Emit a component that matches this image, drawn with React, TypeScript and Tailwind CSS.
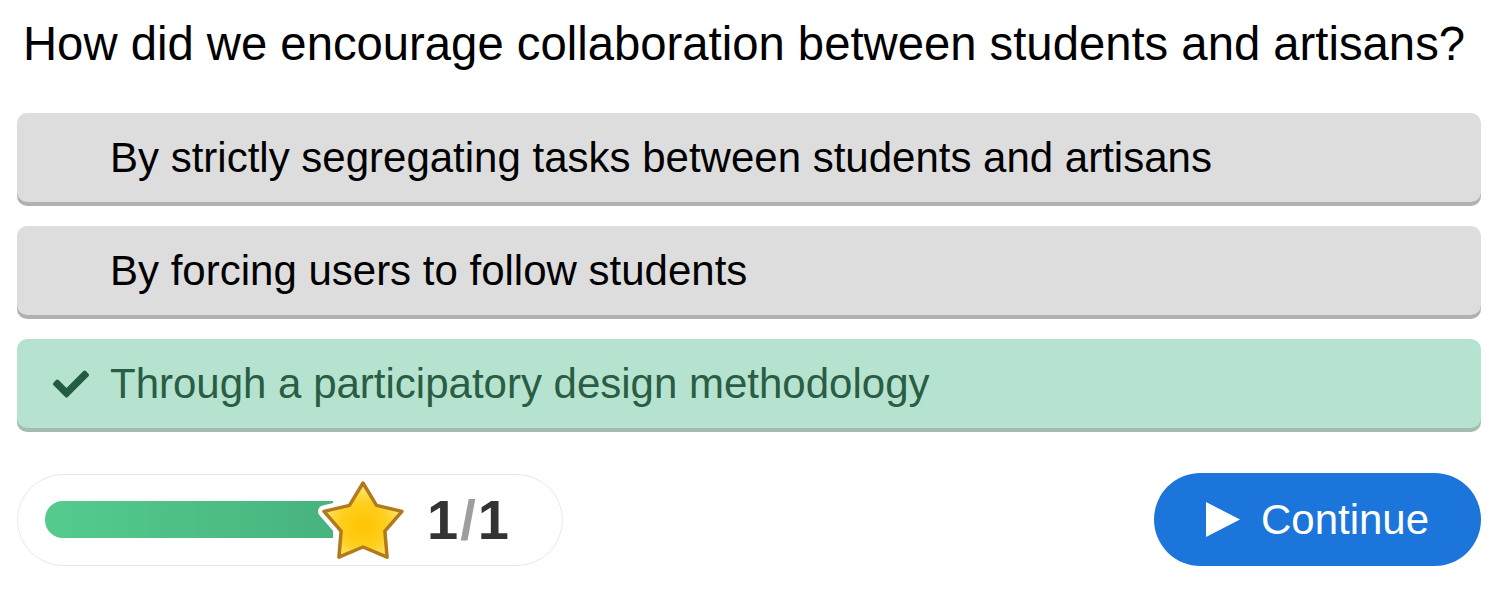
import { FaCheck } from 'react-icons/fa'

const options = [
  { text: 'By strictly segregating tasks between students and artisans', correct: false },
  { text: 'By forcing users to follow students', correct: false },
  { text: 'Through a participatory design methodology', correct: true },
]

const starPoints =
  '45,6 58.52,28.39 83.99,34.33 66.87,54.11 69.1,80.17 45,70 20.9,80.17 23.13,54.11 6.01,34.33 31.48,28.39'

function Star() {
  return (
    <svg width="90" height="90" viewBox="0 0 90 90" className="absolute -right-[75px] -top-[24px]">
      <defs>
        <radialGradient id="starFill" cx="50%" cy="57%" r="55%">
          <stop offset="0%" stopColor="#ffc300" />
          <stop offset="55%" stopColor="#ffcf1f" />
          <stop offset="100%" stopColor="#ffe879" />
        </radialGradient>
      </defs>
      <polygon points={starPoints} fill="#fff" stroke="#fff" strokeWidth="12" strokeLinejoin="round" />
      <polygon points={starPoints} fill="url(#starFill)" stroke="#b17a1b" strokeWidth="3.5" strokeLinejoin="round" />
    </svg>
  )
}

export default function App() {
  return (
    <div className="w-[1505px] h-[605px] bg-white pl-[17px] pr-[24px] pt-[17px] font-['Liberation_Sans',Arial,sans-serif]">
      <h1 className="text-[47.25px] leading-[54px] text-black pl-[6px] whitespace-nowrap">
        How did we encourage collaboration between students and artisans?
      </h1>

      <div className="mt-[42px] flex flex-col gap-[24px]">
        {options.map((o) => (
          <div
            key={o.text}
            className={
              o.correct
                ? 'h-[89px] rounded-[10px] bg-[#b5e3cf] shadow-[0_4px_0_#a3bcaf] flex items-center'
                : 'h-[89px] rounded-[10px] bg-[#dddddd] shadow-[0_4px_0_#b1b1b1] flex items-center'
            }
          >
            <div className="w-[93px] flex justify-end pr-[21px]">
              {o.correct && <FaCheck className="text-[#235c40]" size={36} />}
            </div>
            <span
              className={
                o.correct ? 'text-[42px] text-[#2a5d44] whitespace-nowrap' : 'text-[42px] text-black whitespace-nowrap'
              }
            >
              {o.text}
            </span>
          </div>
        ))}
      </div>

      <div className="mt-[45px] flex items-center justify-between">
        <div className="h-[92px] w-[546px] rounded-full border border-[#e8e8e8] flex items-center pl-[27px]">
          <div className="relative h-[37px] w-[288px] rounded-l-[18px] bg-gradient-to-r from-[#55cb8e] to-[#47b37f]">
            <Star />
          </div>
          <div className="ml-[94px] text-[56px] font-bold leading-none flex items-baseline">
            <span className="text-[#333333]">1</span>
            <span className="text-[#9e9e9e] mx-[2px]">/</span>
            <span className="text-[#333333]">1</span>
          </div>
        </div>

        <button className="h-[93px] w-[327px] rounded-full bg-[#1c75db] flex items-center justify-center gap-[21px] text-white">
          <svg width="34" height="35" viewBox="0 0 34 35">
            <polygon points="0,0 34,17.5 0,35" fill="#fff" />
          </svg>
          <span className="text-[42px] leading-none">Continue</span>
        </button>
      </div>
    </div>
  )
}
